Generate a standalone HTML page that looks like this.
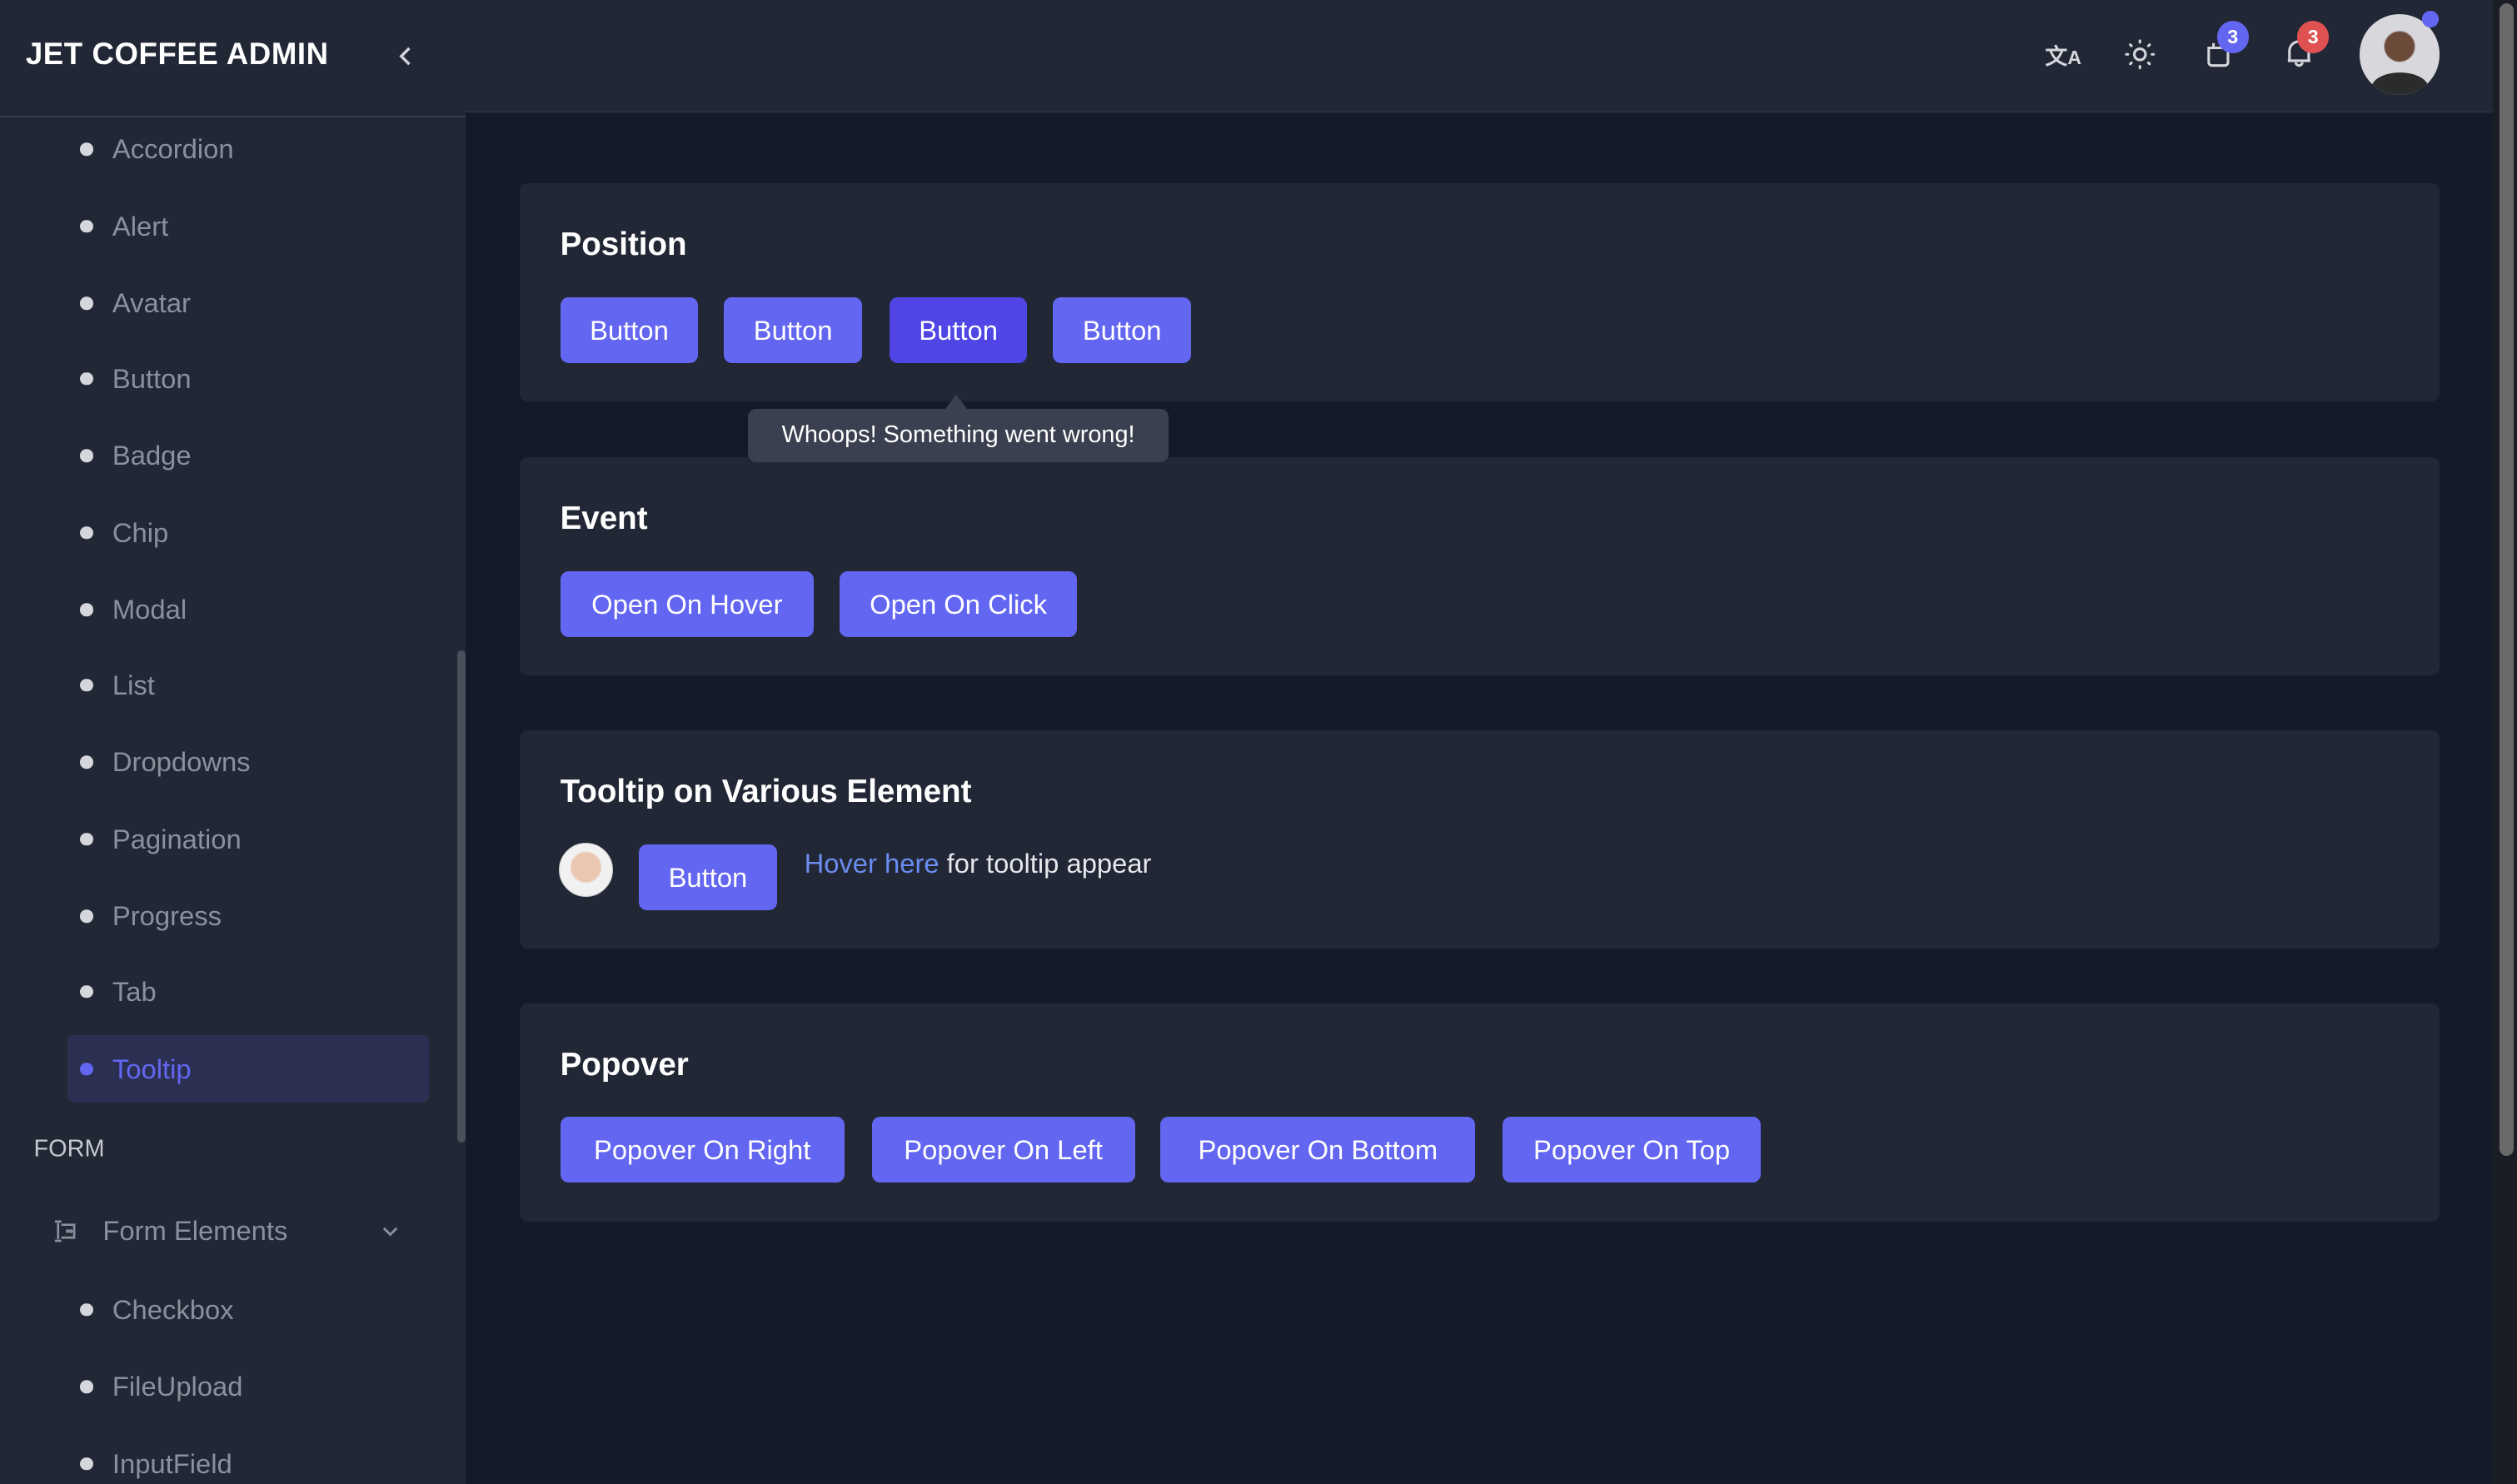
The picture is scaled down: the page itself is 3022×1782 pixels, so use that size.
<!DOCTYPE html>
<html><head><style>
*{box-sizing:border-box;margin:0;padding:0}
html,body{width:3022px;height:1782px;overflow:hidden;background:#141a27}
#w{zoom:1.92730;width:1568px;height:925px;position:relative;font-family:"Liberation Sans",sans-serif;background:#141a27}
.sb{position:absolute;left:0;top:0;width:290px;height:925px;background:#222735}
.logo{position:absolute;left:16px;top:23px;color:#fff;font-weight:bold;font-size:19px;letter-spacing:.3px}
.sbline{position:absolute;left:0;top:72px;width:290px;height:1px;background:#343b4b}
.it{position:absolute;left:70px;color:#8a909c;font-size:17px;transform:translateY(-50%)}
.dot{position:absolute;left:50px;width:8px;height:8px;border-radius:50%;background:#d5d7dc;transform:translateY(-50%)}
.hd{position:absolute;left:290px;top:0;width:1263px;height:70px;background:#222735;border-bottom:1px solid #343b4b}
.card{position:absolute;left:324px;width:1196px;height:136px;background:#222735;border-radius:5px}
.card h2{position:absolute;left:25px;top:27px;color:#fff;font-size:20px;font-weight:bold}
.btn{position:absolute;top:71px;height:41px;background:#6366f1;color:#fff;border-radius:5px;font-size:17px;line-height:41px;text-align:center}
.bd{position:absolute;width:20px;height:20px;border-radius:50%;color:#fff;font-size:12px;font-weight:bold;text-align:center;line-height:20px}
</style></head><body><div id="w">
<div class="sb">
<div class="logo">JET COFFEE ADMIN</div>
<svg style="position:absolute;left:247px;top:28px" width="12" height="14" viewBox="0 0 12 14"><path d="M8 2 3 7l5 5" stroke="#cfd2d8" stroke-width="1.8" fill="none"/></svg>
<div class="sbline"></div>
<div class="dot" style="top:93px"></div><div class="it" style="top:93px">Accordion</div>
<div class="dot" style="top:141px"></div><div class="it" style="top:141px">Alert</div>
<div class="dot" style="top:189px"></div><div class="it" style="top:189px">Avatar</div>
<div class="dot" style="top:236px"></div><div class="it" style="top:236px">Button</div>
<div class="dot" style="top:284px"></div><div class="it" style="top:284px">Badge</div>
<div class="dot" style="top:332px"></div><div class="it" style="top:332px">Chip</div>
<div class="dot" style="top:380px"></div><div class="it" style="top:380px">Modal</div>
<div class="dot" style="top:427px"></div><div class="it" style="top:427px">List</div>
<div class="dot" style="top:475px"></div><div class="it" style="top:475px">Dropdowns</div>
<div class="dot" style="top:523px"></div><div class="it" style="top:523px">Pagination</div>
<div class="dot" style="top:571px"></div><div class="it" style="top:571px">Progress</div>
<div class="dot" style="top:618px"></div><div class="it" style="top:618px">Tab</div>
<div style="position:absolute;left:42px;top:645px;width:225px;height:42px;background:#2b3052;border-radius:4px"></div>
<div class="dot" style="top:666px;background:#6366f1"></div><div class="it" style="top:666px;color:#6366f1">Tooltip</div>
<div class="it" style="top:716px;left:21px;font-size:15px;color:#c5c8cf">FORM</div>
<svg style="position:absolute;left:33px;top:759px" width="18" height="17" viewBox="0 0 18 17" fill="none" stroke="#8a909c" stroke-width="1.4"><path d="M3 3v10M1 2h4M1 14h4M5 4h8v8H5"/><circle cx="9" cy="8" r=".5"/><circle cx="11" cy="8" r=".5"/></svg>
<div class="it" style="top:767px;left:64px">Form Elements</div>
<svg style="position:absolute;left:237px;top:762px" width="12" height="10" viewBox="0 0 12 10"><path d="M2 3l4 4 4-4" stroke="#8a909c" stroke-width="1.5" fill="none"/></svg>
<div class="dot" style="top:816px"></div><div class="it" style="top:816px">Checkbox</div>
<div class="dot" style="top:864px"></div><div class="it" style="top:864px">FileUpload</div>
<div class="dot" style="top:912px"></div><div class="it" style="top:912px">InputField</div>
<div style="position:absolute;left:285px;top:405px;width:5px;height:307px;background:#4a4f5c;border-radius:3px"></div>
</div>
<div class="hd">
<div style="position:absolute;left:984px;top:24px;color:#d5d7dc;font-size:14px;font-weight:bold">文<span style="font-size:12px">A</span></div>
<svg style="position:absolute;left:1033px;top:24px" width="20" height="20" viewBox="0 0 20 20" fill="none" stroke="#d5d7dc" stroke-width="1.6" stroke-linecap="round"><circle cx="10" cy="10" r="3.5"/><path d="M10 1.5v1M10 17.5v1M1.5 10h1M17.5 10h1M4 4l.7.7M15.3 15.3l.7.7M4 16l.7-.7M15.3 4.7l.7-.7"/></svg>
<svg style="position:absolute;left:1084px;top:23px" width="16" height="20" viewBox="0 0 16 20" fill="none" stroke="#d5d7dc" stroke-width="1.6"><path d="M2 7h12v9a2 2 0 0 1-2 2H4a2 2 0 0 1-2-2z M5 7V4M11 7V4"/></svg>
<div class="bd" style="left:1091px;top:13px;background:#6366f1">3</div>
<svg style="position:absolute;left:1133px;top:23px" width="18" height="20" viewBox="0 0 18 20" fill="none" stroke="#d5d7dc" stroke-width="1.6"><path d="M3 15V9a6 6 0 0 1 12 0v6H2h14M7 16a2 2 0 0 0 4 0"/></svg>
<div class="bd" style="left:1141px;top:13px;background:#e05252">3</div>
<div style="position:absolute;left:1180px;top:9px;width:50px;height:50px;border-radius:50%;background:radial-gradient(circle at 50% 40%,#6b4a3a 0 9px,#d8d8dc 10px);overflow:hidden"><div style="position:absolute;left:7px;top:36px;width:36px;height:20px;border-radius:50% 50% 0 0;background:#2a2c2c"></div></div>
<div style="position:absolute;left:1219px;top:7px;width:10px;height:10px;border-radius:50%;background:#6366f1"></div>
</div>
<div style="position:absolute;left:1553px;top:0;width:15px;height:925px;background:#1a1d24"></div>
<div style="position:absolute;left:1557px;top:2px;width:9px;height:718px;background:#6a6a6a;border-radius:5px"></div>

<div class="card" style="top:114px"><h2>Position</h2>
<div class="btn" style="left:25px;width:86px">Button</div>
<div class="btn" style="left:127px;width:86px">Button</div>
<div class="btn" style="left:230px;width:86px;background:#4f46e5">Button</div>
<div class="btn" style="left:332px;width:86px">Button</div>
</div>
<div class="card" style="top:285px"><h2>Event</h2>
<div class="btn" style="left:25px;width:158px">Open On Hover</div>
<div class="btn" style="left:199px;width:148px">Open On Click</div>
</div>
<div style="position:absolute;left:466px;top:255px;width:262px;height:33px;background:#3a4050;border-radius:5px;color:#fff;font-size:15px;line-height:33px;text-align:center">Whoops! Something went wrong!</div>
<div style="position:absolute;left:589px;top:246px;width:0;height:0;border-left:7px solid transparent;border-right:7px solid transparent;border-bottom:9px solid #3a4050"></div>
<div class="card" style="top:455px"><h2>Tooltip on Various Element</h2>
<div style="position:absolute;left:24px;top:70px;width:34px;height:34px;border-radius:50%;background:radial-gradient(circle at 50% 45%,#e9c7b0 0 9px,#f1f1f1 10px);border:1px solid #ccc"></div>
<div class="btn" style="left:74px;width:86px">Button</div>
<div style="position:absolute;left:177px;top:73px;font-size:17px;color:#e5e7eb"><span style="color:#6a8cf0">Hover here</span> for tooltip appear</div>
</div>
<div class="card" style="top:625px"><h2>Popover</h2>
<div class="btn" style="left:25px;width:177px">Popover On Right</div>
<div class="btn" style="left:219px;width:164px">Popover On Left</div>
<div class="btn" style="left:399px;width:196px">Popover On Bottom</div>
<div class="btn" style="left:612px;width:161px">Popover On Top</div>
</div>
</div></body></html>
